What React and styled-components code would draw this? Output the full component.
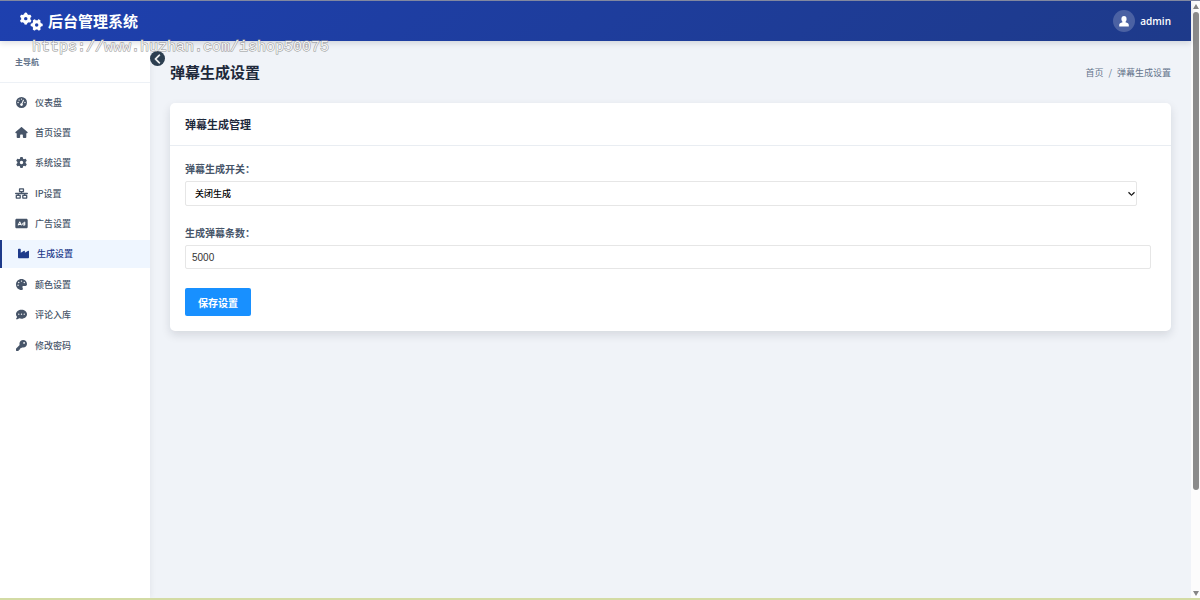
import React from "react";
import styled, { createGlobalStyle } from "styled-components";
import {
  FaGears, FaGaugeHigh, FaHouse, FaGear, FaNetworkWired, FaRectangleAd,
  FaIndustry, FaPalette, FaCommentDots, FaKey, FaChevronLeft, FaChevronDown,
} from "react-icons/fa6";

const GlobalStyle = createGlobalStyle`
  * { box-sizing: border-box; }
  body {
    margin: 0;
    background: #f0f3f8;
    color: #1e293b;
    font-family: "Noto Sans CJK SC", sans-serif;
    font-size: 9px;
  }
`;

const Frame = styled.div`
  display: flex;
  height: 100vh;
  overflow: hidden;
  border-top: 1px solid #8288a0;
  border-bottom: 2px solid #d3dba4;
`;

const Shell = styled.div`
  flex: 1;
  min-width: 0;
  display: flex;
  flex-direction: column;
`;

const Header = styled.header`
  position: relative;
  z-index: 1;
  flex: none;
  height: 40px;
  padding: 0 20px;
  display: flex;
  align-items: center;
  justify-content: space-between;
  background: linear-gradient(135deg, #1e40af, #1e3a8a);
  color: #fff;
  box-shadow: 0 2px 6px rgba(15, 23, 42, 0.14);
`;

const Brand = styled.div`
  display: flex;
  align-items: center;
  gap: 5px;
  font-size: 15px;
  font-weight: 700;
  line-height: 20px;

  svg { width: 23px; height: 19px; }
`;

const Account = styled.div`
  display: flex;
  align-items: center;
  gap: 5px;
  font-family: "Open Sans", sans-serif;
  font-size: 10px;
  font-weight: 600;
`;

const Avatar = styled.span`
  display: grid;
  place-items: center;
  width: 22px;
  height: 22px;
  border-radius: 50%;
  background: rgba(255, 255, 255, 0.2);
`;

const Watermark = styled.div`
  position: absolute;
  z-index: 3;
  top: 39px;
  left: 32px;
  color: #f4f4f4;
  font: 15px/18px "Liberation Mono", monospace;
  -webkit-text-stroke: 1px #939393;
  paint-order: stroke fill;
  pointer-events: none;
`;

const Body = styled.div`
  flex: 1;
  min-height: 0;
  display: flex;
`;

const Sidebar = styled.aside`
  position: relative;
  flex: none;
  width: 150px;
  background: #fff;
  box-shadow: 1px 0 6px rgba(15, 23, 42, 0.06);
`;

const NavTitle = styled.div`
  height: 42px;
  padding: 0 15px;
  border-bottom: 1px solid #edf1f6;
  color: #64748b;
  font-size: 8px;
  font-weight: 700;
  line-height: 41px;
`;

const Collapse = styled.button`
  position: absolute;
  top: 10px;
  right: -15px;
  display: grid;
  place-items: center;
  width: 15px;
  height: 15px;
  padding: 0;
  border: 0;
  border-radius: 50%;
  background: #2c3e50;
  color: #fff;

  svg { width: 10px; height: 10px; stroke: #fff; stroke-width: 24px; }
`;

const NavList = styled.nav`
  display: flex;
  flex-direction: column;
  justify-content: space-between;
  height: 276px;
  padding-top: 5px;
`;

const NavLink = styled.a`
  display: flex;
  align-items: center;
  gap: 7px;
  height: 28px;
  padding-left: 15px;
  color: #475569;
  font-size: 9px;
  font-weight: 500;
  text-decoration: none;

  &[aria-current] {
    border-left: 2px solid #1e3a8a;
    background: #eff6ff;
    color: #1e3a8a;
  }

  svg { width: 13px; height: 11px; }
`;

const Main = styled.main`
  flex: 1;
  min-width: 0;
  padding: 20px;
`;

const PageHead = styled.div`
  display: flex;
  align-items: center;
  justify-content: space-between;
  height: 22px;
  margin-bottom: 20px;
`;

const PageTitle = styled.h1`
  margin: 0;
  font-size: 15px;
  font-weight: 700;
  line-height: 20px;
`;

const Crumbs = styled.nav`
  display: flex;
  gap: 5px;
  color: #64748b;
  font-size: 9px;

  a { color: inherit; text-decoration: none; }
`;

const Card = styled.section`
  border-radius: 5px;
  background: #fff;
  box-shadow: 0 4px 10px rgba(15, 23, 42, 0.12);
`;

const CardHead = styled.h2`
  height: 43px;
  margin: 0;
  padding: 0 15px;
  border-bottom: 1px solid #e9edf2;
  font-size: 11px;
  font-weight: 700;
  line-height: 43px;
`;

const Form = styled.form`
  padding: 15px;
`;

const Field = styled.div`
  margin-bottom: 19px;
`;

const Label = styled.label`
  display: block;
  margin-bottom: 4px;
  color: #475569;
  font-size: 10px;
  font-weight: 700;
  line-height: 16px;
`;

const SelectBox = styled.div`
  position: relative;
  width: calc(100% - 19px);

  svg {
    position: absolute;
    top: 9px;
    right: 2px;
    width: 7px;
    height: 7px;
    color: #000;
    stroke: #000;
    stroke-width: 30px;
    pointer-events: none;
  }
`;

const Select = styled.select`
  display: block;
  width: 100%;
  height: 25px;
  padding: 0 9px;
  border: 1px solid #e6e6e6;
  border-radius: 2px;
  appearance: none;
  background: #fff;
  color: #000;
  font: 500 9px "Noto Sans CJK SC", sans-serif;
`;

const Input = styled.input`
  display: block;
  width: calc(100% - 5px);
  height: 24px;
  padding: 0 6px;
  border: 1px solid #e6e6e6;
  border-radius: 2px;
  background: #fff;
  color: #333;
  font: 10px "Liberation Sans", sans-serif;
`;

const SaveButton = styled.button`
  display: block;
  height: 28px;
  padding: 0 13px;
  border: 0;
  border-radius: 2px;
  background: #1890ff;
  color: #fff;
  font: 700 10px "Noto Sans CJK SC", sans-serif;
`;

const ScrollTrack = styled.div`
  flex: none;
  display: flex;
  flex-direction: column;
  align-items: center;
  gap: 3px;
  width: 9px;
  padding: 3px 0 2px;
  background: #fcfcfc;

  svg { flex: none; width: 6px; height: 5px; fill: #858585; }
`;

const ScrollRail = styled.div`
  flex: 1;
  width: 6px;
`;

const ScrollThumb = styled.div`
  height: 83%;
  border-radius: 3px;
  background: #8b8b8b;
`;

const navItems = [
  { label: "仪表盘", Icon: FaGaugeHigh },
  { label: "首页设置", Icon: FaHouse },
  { label: "系统设置", Icon: FaGear },
  { label: "IP设置", Icon: FaNetworkWired },
  { label: "广告设置", Icon: FaRectangleAd },
  { label: "生成设置", Icon: FaIndustry, active: true },
  { label: "颜色设置", Icon: FaPalette },
  { label: "评论入库", Icon: FaCommentDots },
  { label: "修改密码", Icon: FaKey },
];

export default function App() {
  return (
    <>
      <GlobalStyle />
      <Frame>
        <Shell>
          <Header>
            <Brand><FaGears />后台管理系统</Brand>
            <Account>
              <Avatar>
                <svg width="10" height="11" viewBox="0 0 10 11" fill="currentColor" aria-hidden="true">
                  <ellipse cx="5" cy="3" rx="2.6" ry="3" />
                  <path d="M3.5 5h3v1.300c2 .4 3.300 1.200 3.300 2.600V10.500H.2V8.900c0-1.400 1.300-2.200 3.300-2.600z" />
                </svg>
              </Avatar>
              admin
            </Account>
          </Header>
          <Body>
            <Sidebar>
              <NavTitle>主导航</NavTitle>
              <NavList aria-label="主导航">
                {navItems.map(({ label, Icon, active }) => (
                  <NavLink key={label} href="#" aria-current={active ? "page" : undefined}>
                    <Icon />{label}
                  </NavLink>
                ))}
              </NavList>
              <Collapse type="button" aria-label="收起"><FaChevronLeft /></Collapse>
            </Sidebar>
            <Main>
              <PageHead>
                <PageTitle>弹幕生成设置</PageTitle>
                <Crumbs><a href="#">首页</a><span>/</span><span>弹幕生成设置</span></Crumbs>
              </PageHead>
              <Card>
                <CardHead>弹幕生成管理</CardHead>
                <Form>
                  <Field>
                    <Label htmlFor="switch">弹幕生成开关：</Label>
                    <SelectBox>
                      <Select id="switch" defaultValue="off">
                        <option value="off">关闭生成</option>
                        <option value="on">开启生成</option>
                      </Select>
                      <FaChevronDown />
                    </SelectBox>
                  </Field>
                  <Field>
                    <Label htmlFor="count">生成弹幕条数：</Label>
                    <Input id="count" type="text" defaultValue="5000" />
                  </Field>
                  <SaveButton type="button">保存设置</SaveButton>
                </Form>
              </Card>
            </Main>
          </Body>
        </Shell>
        <ScrollTrack aria-hidden="true">
          <svg viewBox="0 0 6 5"><path d="M3 0 6 5H0z" /></svg>
          <ScrollRail><ScrollThumb /></ScrollRail>
          <svg viewBox="0 0 6 5"><path d="M0 0h6L3 5z" /></svg>
        </ScrollTrack>
      </Frame>
      <Watermark>https://www.huzhan.com/ishop50075</Watermark>
    </>
  );
}
